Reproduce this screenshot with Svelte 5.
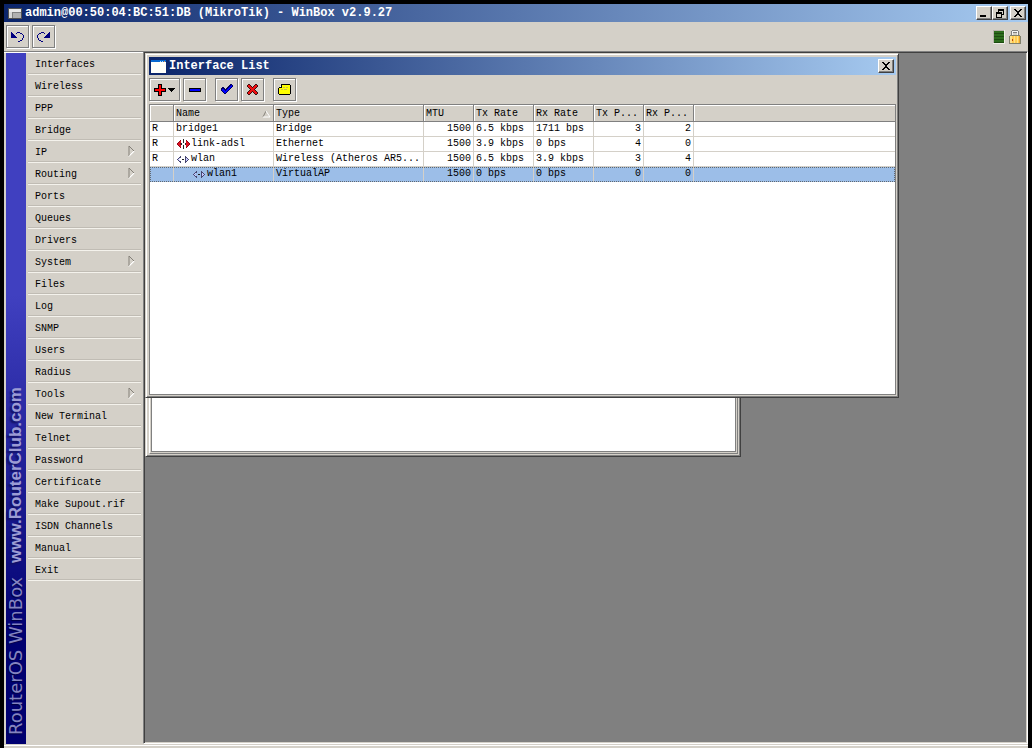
<script lang="ts">
	type Row = {
		flag: string;
		icon: string;
		name: string;
		type: string;
		mtu: number;
		txRate: string;
		rxRate: string;
		txPackets: number;
		rxPackets: number;
		child?: boolean;
	};

	const menu = [
		{ label: 'Interfaces' },
		{ label: 'Wireless' },
		{ label: 'PPP' },
		{ label: 'Bridge' },
		{ label: 'IP', sub: true },
		{ label: 'Routing', sub: true },
		{ label: 'Ports' },
		{ label: 'Queues' },
		{ label: 'Drivers' },
		{ label: 'System', sub: true },
		{ label: 'Files' },
		{ label: 'Log' },
		{ label: 'SNMP' },
		{ label: 'Users' },
		{ label: 'Radius' },
		{ label: 'Tools', sub: true },
		{ label: 'New Terminal' },
		{ label: 'Telnet' },
		{ label: 'Password' },
		{ label: 'Certificate' },
		{ label: 'Make Supout.rif' },
		{ label: 'ISDN Channels' },
		{ label: 'Manual' },
		{ label: 'Exit' }
	];

	const rows: Row[] = [
		{ flag: 'R', icon: '', name: 'bridge1', type: 'Bridge', mtu: 1500, txRate: '6.5 kbps', rxRate: '1711 bps', txPackets: 3, rxPackets: 2 },
		{ flag: 'R', icon: 'ether', name: 'link-adsl', type: 'Ethernet', mtu: 1500, txRate: '3.9 kbps', rxRate: '0 bps', txPackets: 4, rxPackets: 0 },
		{ flag: 'R', icon: 'wlan', name: 'wlan', type: 'Wireless (Atheros AR5...', mtu: 1500, txRate: '6.5 kbps', rxRate: '3.9 kbps', txPackets: 3, rxPackets: 4 },
		{ flag: '', icon: 'wlan', name: 'wlan1', type: 'VirtualAP', mtu: 1500, txRate: '0 bps', rxRate: '0 bps', txPackets: 0, rxPackets: 0, child: true }
	];

	let selected = $state(3);
</script>

{#snippet cross()}
	<svg width="10" height="8" viewBox="0 0 10 8" shape-rendering="crispEdges">
		<path d="M1 0h2v1h1v1h2v-1h1v-1h2v1h-1v1h-1v1h-1v2h1v1h1v1h1v1h-2v-1h-1v-1h-2v1h-1v1h-2v-1h1v-1h1v-1h1v-2h-1v-1h-1v-1h-1z" fill="#000" />
	</svg>
{/snippet}

{#snippet turn()}
	<path d="M0 1h1v1h1v1h1v1h1v1h1v1h1v1h-6z" fill="#000080" />
	<path d="M6 1h3v1h-3zM5 2h1v1h-1zM9 2h2v1h-2zM11 3h1v1h-1zM12 4h1v3h-1zM11 7h1v2h-1zM9 9h2v1h-2zM7 10h2v1h-2z" fill="#000080" />
{/snippet}

<div class="app">
	<header class="titlebar main">
		<svg class="app-icon" width="14" height="11" viewBox="0 0 14 11" shape-rendering="crispEdges">
			<path d="M0 0h14v11h-14z" fill="#505050" />
			<path d="M1 1h12v9h-12z" fill="#b0b0b0" />
			<path d="M1 1h12v3h-12z" fill="#e8e8e8" />
			<path d="M1 4h3v6h-3z" fill="#d8d8d8" />
			<path d="M4 4h9v1h-9zM4 5h1v5h-1z" fill="#808080" />
		</svg>
		<h1>admin@00:50:04:BC:51:DB (MikroTik) - WinBox v2.9.27</h1>
		<div class="controls">
			<button class="ctl" aria-label="Minimize">
				<svg width="10" height="8" viewBox="0 0 10 8" shape-rendering="crispEdges"><path d="M1 6h6v2h-6z" /></svg>
			</button>
			<button class="ctl" aria-label="Restore">
				<svg width="10" height="9" viewBox="0 0 10 9" shape-rendering="crispEdges">
					<path d="M3 0h6v6h-2v-1h1v-3h-4v1h-1zM1 3h6v6h-6zM2 5v3h4v-3z" fill-rule="evenodd" />
				</svg>
			</button>
			<button class="ctl close" aria-label="Close">{@render cross()}</button>
		</div>
	</header>

	<div class="toolbar top">
		<button class="tool" aria-label="Undo">
			<svg width="13" height="11" viewBox="0 0 13 11" shape-rendering="crispEdges">{@render turn()}</svg>
		</button>
		<button class="tool" aria-label="Redo">
			<svg width="13" height="11" viewBox="0 0 13 11" shape-rendering="crispEdges">
				<g transform="matrix(-1 0 0 1 13 0)">{@render turn()}</g>
			</svg>
		</button>
		<div class="status">
			<svg width="12" height="14" viewBox="0 0 12 14" shape-rendering="crispEdges">
				<path d="M0 0h12v14h-12z" fill="#f0eee8" />
				<path d="M0 0h11v13h-11z" fill="#b8b4ac" />
				<path d="M1 1h10v12h-10z" fill="#2c6c1c" />
				<path d="M1 3h10v1h-10zM1 6h10v1h-10zM1 9h10v1h-10zM1 12h10v1h-10z" fill="#1c4c10" />
			</svg>
			<svg width="12" height="14" viewBox="0 0 12 14" shape-rendering="crispEdges">
				<path d="M3 0h6v1h1v5h-2v-3h-4v3h-2v-5h1z" fill="#808080" />
				<path d="M3 1h6v1h-6zM3 2h1v4h-1zM8 2h1v4h-1z" fill="#f4f4f4" />
				<path d="M0 6h1v-1h10v1h1v8h-12z" fill="#80806c" />
				<path d="M1 6h10v7h-10z" fill="#ffcc50" />
				<path d="M1 6h2v7h-2zM5 6h1v7h-1zM8 6h1v7h-1z" fill="#ffe08c" />
				<path d="M10 6h1v7h-1z" fill="#e8a030" />
				<path d="M3 9h1v2h-1z" fill="#c04010" />
			</svg>
		</div>
	</div>

	<div class="workspace">
		<aside class="sidebar">
			<div class="band">
				<span class="product">RouterOS WinBox</span>
				<span class="site">www.RouterClub.com</span>
			</div>
			<nav>
				{#each menu as item}
					<button class="menu-item">
						{item.label}
						{#if item.sub}
							<svg width="7" height="16" viewBox="0 0 7 16">
								<path d="M1 11L6 6" stroke="#fff" fill="none" />
								<path d="M1 11V1L6 6" stroke="#848078" fill="none" />
								<path d="M1 11.500L6 6.500" stroke="#fff" fill="none" />
							</svg>
						{/if}
					</button>
				{/each}
			</nav>
		</aside>

		<main class="desktop">
			<section class="window back">
				<div class="inner"><div class="blank"></div></div>
			</section>

			<section class="window front">
				<header class="titlebar">
					<svg width="15" height="13" viewBox="0 0 15 13" shape-rendering="crispEdges">
						<path d="M0 0h15v3h-15z" fill="#0868d0" />
						<path d="M0 2h15v11h-15z" fill="#fffffa" />
						<path d="M9 1h1v1h-1zM11 1h1v1h-1z" fill="#b0d8ff" />
						<path d="M13 1h1v1h-1z" fill="#f09040" />
					</svg>
					<h2>Interface List</h2>
					<div class="controls">
						<button class="ctl close" aria-label="Close Interface List">{@render cross()}</button>
					</div>
				</header>

				<div class="toolbar">
					<button class="tool wide" aria-label="Add">
						<svg width="23" height="12" viewBox="0 0 23 12" shape-rendering="crispEdges">
							<path d="M5 0h4v4h4v4h-4v4h-4v-4h-4v-4h4z" />
							<path d="M6 1h2v4h4v2h-4v4h-2v-4h-4v-2h4z" fill="#f00" />
							<path d="M15 4h7v1h-1v1h-1v1h-1v1h-1v-1h-1v-1h-1v-1h-1z" />
						</svg>
					</button>
					<button class="tool" aria-label="Remove">
						<svg width="12" height="4" viewBox="0 0 12 4" shape-rendering="crispEdges">
							<path d="M0 0h12v4h-12z" />
							<path d="M1 1h10v2h-10z" fill="#00f" />
						</svg>
					</button>
					<button class="tool split" aria-label="Enable">
						<svg width="12" height="11" viewBox="0 0 12 11" shape-rendering="crispEdges">
							<path d="M9 0h2v1h1v2h-1v1h-1v1h-1v1h-1v1h-1v1h-1v1h-1v1h-2v-1h-1v-1h-1v-1h-1v-3h1v-1h2v1h1v1h1v-1h1v-1h1v-1h1v-1h1z" fill="#000060" />
							<path d="M9 1h2v2h-1v1h-1v1h-1v1h-1v1h-1v1h-1v1h-2v-1h-1v-1h-1v-2h2v1h1v1h1v-1h1v-1h1v-1h1v-1h1v-1h1z" fill="#00f" />
						</svg>
					</button>
					<button class="tool" aria-label="Disable">
						<svg width="11" height="11" viewBox="0 0 11 11" shape-rendering="crispEdges">
							<path d="M1 0h2v1h1v1h1v1h1v-1h1v-1h1v-1h2v1h1v2h-1v1h-1v1h-1v1h1v1h1v1h1v2h-1v1h-2v-1h-1v-1h-1v-1h-1v1h-1v1h-1v1h-2v-1h-1v-2h1v-1h1v-1h1v-1h-1v-1h-1v-1h-1v-2h1z" fill="#401010" />
							<path d="M1 1h2v1h1v1h1v1h1v-1h1v-1h1v-1h2v2h-1v1h-1v1h-1v1h1v1h1v1h1v2h-2v-1h-1v-1h-1v-1h-1v1h-1v1h-1v1h-2v-2h1v-1h1v-1h1v-1h-1v-1h-1v-1h-1z" fill="#f01010" />
						</svg>
					</button>
					<button class="tool split" aria-label="Comment">
						<svg width="13" height="11" viewBox="0 0 13 11" shape-rendering="crispEdges">
							<path d="M3 0h9v1h1v9h-1v1h-11v-1h-1v-6h1v-1h1v-1h1z" />
							<path d="M4 1h8v9h-11v-6h3z" fill="#ff0" />
							<path d="M2 2h1v1h-1z" fill="#fff" />
							<path d="M5 3h2v1h-2zM8 3h2v1h-2zM3 5h2v1h-2zM6 5h3v1h-3z" fill="#c8c050" />
						</svg>
					</button>
				</div>

				<div class="list">
					<table>
						<colgroup>
							<col class="c-flag" /><col class="c-name" /><col class="c-type" /><col class="c-num" />
							<col class="c-rate" /><col class="c-rate" /><col class="c-num" /><col class="c-num" /><col />
						</colgroup>
						<thead>
							<tr>
								<th></th>
								<th>
									<div class="sortable">
										Name
										<svg width="9" height="8" viewBox="0 0 9 8">
											<path d="M1 7L4 1" stroke="#848078" fill="none" />
											<path d="M4 1L8 7H1" stroke="#fff" fill="none" />
										</svg>
									</div>
								</th>
								<th>Type</th>
								<th>MTU</th>
								<th>Tx Rate</th>
								<th>Rx Rate</th>
								<th>Tx P...</th>
								<th>Rx P...</th>
								<th></th>
							</tr>
						</thead>
						<tbody>
							{#each rows as row, i}
								<tr class:selected={selected === i} onclick={() => (selected = i)}>
									<td>{row.flag}</td>
									<td>
										<div class="name" class:child={row.child}>
											{#if row.icon === 'ether'}
												<svg width="15" height="10" viewBox="0 0 15 10" shape-rendering="crispEdges">
													<path d="M4 1h1v8h-1v-1h-1v-1h-1v-1h-1v-2h1v-1h1v-1h1zM10 1h1v1h1v1h1v1h1v2h-1v1h-1v1h-1v1h-1z" fill="#900818" />
													<path d="M4 2h1v2h-1v2h1v2h-1v-1h-1v-1h-1v-2h1v-1h1zM10 2h1v1h1v1h1v2h-1v1h-1v1h-1z" fill="#e01020" />
													<path d="M7 0h1v4h-1zM7 6h1v4h-1zM5 4h1v2h-1zM9 4h1v2h-1z" fill="#282828" />
												</svg>
											{:else if row.icon === 'wlan'}
												<svg width="15" height="10" viewBox="0 0 15 10" shape-rendering="crispEdges">
													<path d="M1 5h1v-1h1v-1h1v-1h1v2h-1v1h-1v1h1v1h1v2h-1v-1h-1v-1h-1v-1h-1zM9 2h1v1h1v1h1v1h1v1h-1v1h-1v1h-1v1h-1z" fill="#484870" />
													<path d="M2 5h1v-1h1v1h-1v1h1v1h-1v-1h-1zM10 4h1v1h1v1h-1v1h-1z" fill="#c8c8ff" />
													<path d="M6 5h2v1h-2z" fill="#202020" />
												</svg>
											{/if}
											{row.name}
										</div>
									</td>
									<td>{row.type}</td>
									<td class="num">{row.mtu}</td>
									<td>{row.txRate}</td>
									<td>{row.rxRate}</td>
									<td class="num">{row.txPackets}</td>
									<td class="num">{row.rxPackets}</td>
									<td></td>
								</tr>
							{/each}
						</tbody>
					</table>
				</div>
			</section>
		</main>
	</div>
	<footer></footer>
</div>

<style>
	:global(body) {
		background: #000;
	}

	.app {
		--face: #d4d0c8;
		--shade: #808080;
		--dark: #404040;
		box-sizing: border-box;
		min-height: 100vh;
		border: 4px solid #000;
		border-bottom: 0;
		display: flex;
		flex-direction: column;
		background: var(--face);
		color: #000;
		font: 10px/14px 'Liberation Mono', 'Courier New', monospace;
	}

	button {
		box-sizing: border-box;
		margin: 0;
		padding: 0;
		border: 0;
		border-radius: 0;
		background: var(--face);
		color: inherit;
		font: inherit;
	}

	svg {
		display: block;
		flex: none;
	}

	.titlebar {
		display: flex;
		align-items: center;
		gap: 3px;
		height: 18px;
		padding: 0 2px;
		background: linear-gradient(90deg, #0a246a, #a6caf0);
		color: #fff;
	}

	.titlebar.main {
		padding-left: 4px;
	}

	h1,
	h2 {
		margin: 0;
		font-size: 12px;
		line-height: 18px;
		font-weight: bold;
		white-space: nowrap;
	}

	.controls {
		display: flex;
		margin-left: auto;
	}

	.ctl {
		display: flex;
		align-items: center;
		justify-content: center;
		width: 16px;
		height: 14px;
		border: 1px solid;
		border-color: #fff var(--dark) var(--dark) #fff;
		box-shadow: inset -1px -1px var(--shade);
	}

	.ctl + .close {
		margin-left: 2px;
	}

	.toolbar {
		display: flex;
		align-items: center;
		gap: 3px;
		height: 29px;
	}

	.toolbar.top {
		padding: 0 7px 0 2px;
	}

	.tool {
		display: flex;
		align-items: center;
		justify-content: center;
		width: 23px;
		height: 23px;
		border: 1px solid var(--shade);
		box-shadow: 1px 1px #fff, inset 1px 1px #fff;
	}

	.tool.wide {
		width: 31px;
	}

	.tool.split {
		margin-left: 6px;
	}

	.status {
		display: flex;
		align-items: center;
		gap: 4px;
		margin-left: auto;
	}

	.workspace {
		flex: 1;
		display: flex;
	}

	.sidebar {
		flex: none;
		display: flex;
		gap: 2px;
		width: 135px;
		padding: 1px 2px 0;
		border-top: 1px solid var(--shade);
		box-shadow: inset 0 1px #fff;
	}

	.band {
		display: flex;
		align-items: center;
		gap: 14px;
		box-sizing: border-box;
		width: 20px;
		padding-top: 9px;
		writing-mode: vertical-rl;
		transform: rotate(180deg);
		background: linear-gradient(0deg, #4040c0 0%, #4040c0 35%, #000070 85%, #000070 100%);
		white-space: nowrap;
	}

	.product {
		color: #8484c0;
		font: 18px/18px 'DejaVu Sans', Verdana, sans-serif;
		text-shadow: -1px -1px 1px #000040;
	}

	.site {
		color: #9c9cd4;
		font: bold 17px/18px 'Liberation Sans', Arial, sans-serif;
		text-shadow: -2px -2px 2px #101060;
	}

	nav {
		flex: 1;
	}

	.menu-item {
		display: flex;
		align-items: center;
		justify-content: space-between;
		width: 100%;
		height: 22px;
		padding: 3px 6px 0 7px;
		border-bottom: 1px solid #f4f2ec;
		box-shadow: inset 0 -1px #c0bcb4;
	}

	.desktop {
		flex: 1;
		position: relative;
		border: 1px solid;
		border-color: var(--shade) #fff #fff var(--shade);
		background: #808080;
		box-shadow: inset 1px 1px var(--dark), inset -1px -1px var(--face);
	}

	/* MDI child windows */
	.window {
		position: absolute;
		top: 1px;
		left: 1px;
		box-sizing: border-box;
		display: flex;
		flex-direction: column;
		padding: 3px 2px 2px 3px;
		border: 1px solid;
		border-color: var(--face) var(--dark) var(--dark) var(--face);
		background: var(--face);
		box-shadow: inset 1px 1px #fff, inset -1px -1px var(--shade);
	}

	.back {
		width: 596px;
		height: 404px;
	}

	.front {
		width: 754px;
		height: 345px;
	}

	.inner {
		flex: 1;
		display: flex;
		padding: 1px;
		border: 1px solid;
		border-color: #fff var(--shade) var(--shade) #fff;
	}

	.blank {
		flex: 1;
		border: 1px solid var(--shade);
		background: #fff;
	}

	.list {
		flex: 1;
		border: 1px solid var(--shade);
		background: #fff;
	}

	table {
		width: 100%;
		table-layout: fixed;
		border-collapse: separate;
		border-spacing: 0;
	}

	.c-flag {
		width: 24px;
	}

	.c-name {
		width: 100px;
	}

	.c-type {
		width: 150px;
	}

	.c-num {
		width: 50px;
	}

	.c-rate {
		width: 60px;
	}

	th,
	td {
		box-sizing: border-box;
		padding: 0 2px;
		overflow: hidden;
		text-align: left;
		white-space: nowrap;
	}

	th {
		height: 17px;
		padding-top: 2px;
		border: 1px solid var(--shade);
		border-width: 0 1px 1px 0;
		background: var(--face);
		box-shadow: inset 1px 1px #fff;
		font-weight: normal;
	}

	td {
		height: 15px;
		border: 1px solid var(--face);
		border-width: 0 1px 1px 0;
	}

	th:last-child,
	td:last-child {
		border-right: 0;
	}

	.num {
		text-align: right;
	}

	.selected {
		background: #9cbee8;
		outline: 1px dotted #606870;
		outline-offset: -1px;
	}

	.selected td {
		border-bottom-color: #9cbee8;
	}

	.sortable {
		display: flex;
		align-items: center;
		justify-content: space-between;
	}

	.name {
		display: flex;
		align-items: center;
	}

	.child {
		padding-left: 16px;
	}

	footer {
		height: 4px;
		box-shadow: inset 0 1px var(--face), inset 0 2px #fff;
	}
</style>
